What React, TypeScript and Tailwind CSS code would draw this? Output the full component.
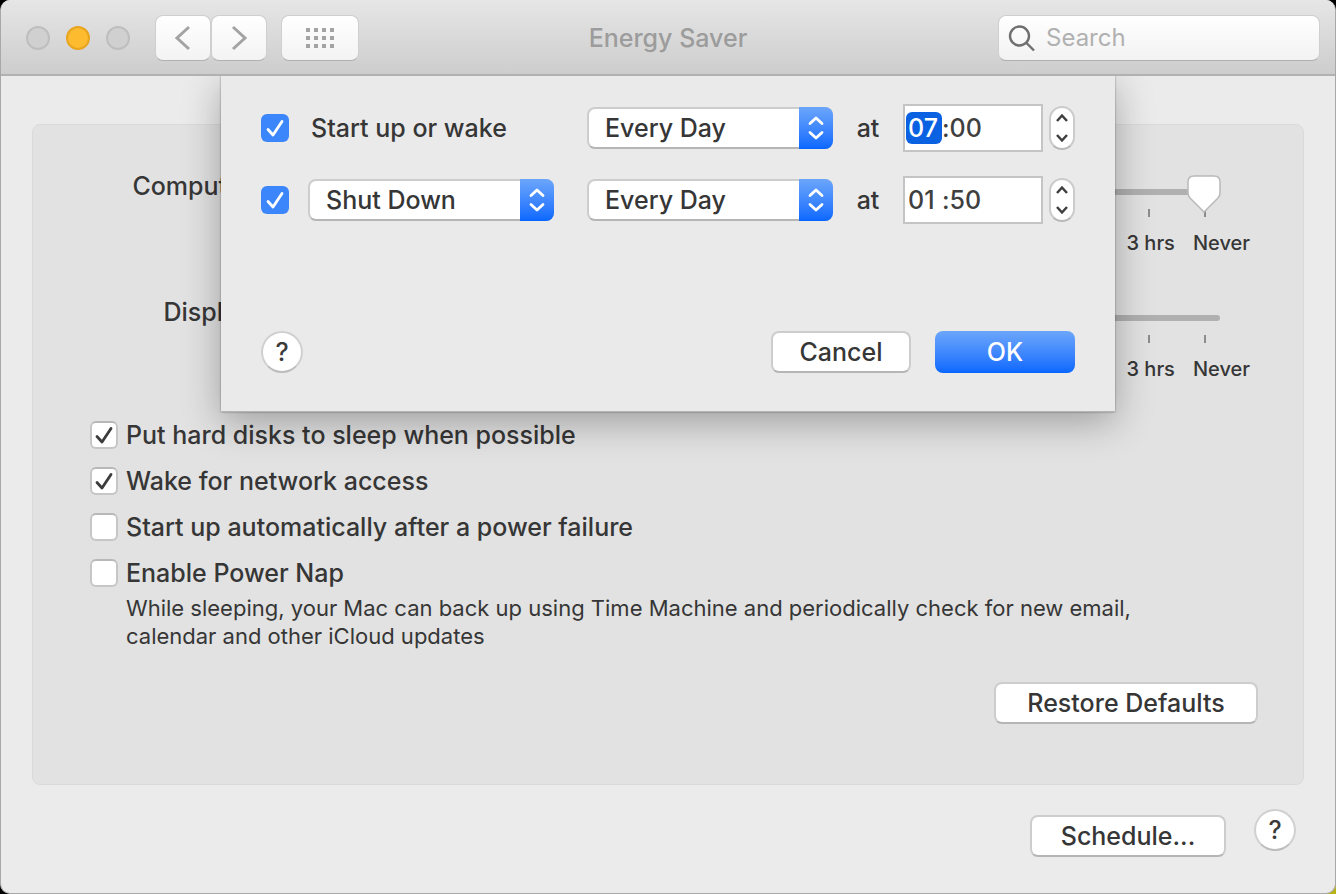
import { useState } from "react";

function Chevron({ points, className }: { points: string; className?: string }) {
  return (
    <svg
      className={className ?? "w-8 h-8"}
      viewBox="0 0 32 32"
      fill="none"
      stroke="currentColor"
      strokeWidth={3}
      aria-hidden="true"
    >
      <polyline points={points} />
    </svg>
  );
}

function CheckBox({
  id,
  label,
  checked,
  accent,
  onChange,
}: {
  id: string;
  label?: string;
  checked: boolean;
  accent?: boolean;
  onChange: (value: boolean) => void;
}) {
  return (
    <span className="relative flex w-7 h-7 flex-shrink-0">
      <input
        id={id}
        type="checkbox"
        aria-label={label}
        checked={checked}
        onChange={(e) => onChange(e.target.checked)}
        className={`appearance-none w-7 h-7 rounded-md ${
          accent
            ? "bg-[#3b86fb]"
            : "bg-white border-2 border-[#c6c6c6] border-t-[#b8b8b8]"
        }`}
      />
      {checked && (
        <svg
          className={`absolute inset-0 w-7 h-7 pointer-events-none ${accent ? "text-white" : "text-[#3c3c3c]"}`}
          viewBox="0 0 28 28"
          fill="none"
          stroke="currentColor"
          strokeWidth={2.8}
          strokeLinecap="round"
          strokeLinejoin="round"
          aria-hidden="true"
        >
          <path d="M7 15.5L12 21L21 7.5" />
        </svg>
      )}
    </span>
  );
}

function PopUp({ label, options }: { label: string; options: string[] }) {
  return (
    <div className="relative w-[246px] h-[42px]">
      <select
        aria-label={label}
        className="appearance-none w-full h-full pl-4 pr-10 rounded-lg bg-white border-2 border-[#cdcdcd] border-b-[#b5b5b5] text-[25px] leading-8 text-[#363636]"
      >
        {options.map((option) => (
          <option key={option}>{option}</option>
        ))}
      </select>
      <span className="absolute right-0 top-0 flex items-center justify-center w-[34px] h-full rounded-r-lg bg-linear-to-b from-[#6ca6fb] to-[#0667fe] text-white pointer-events-none">
        <svg
          className="w-5 h-7"
          viewBox="0 0 20 28"
          fill="none"
          stroke="currentColor"
          strokeWidth={2.8}
          strokeLinecap="round"
          strokeLinejoin="round"
          aria-hidden="true"
        >
          <path d="M4 9.5L10 4L16 9.5M4 18.5L10 24L16 18.5" />
        </svg>
      </span>
    </div>
  );
}

function TimeField({
  label,
  hours,
  minutes,
  selected,
}: {
  label: string;
  hours: string;
  minutes: string;
  selected?: boolean;
}) {
  return (
    <div className="flex items-center gap-[6px]">
      <div
        role="group"
        aria-label={label}
        className="flex items-center w-[140px] h-12 pl-[1px] bg-white border-2 border-[#c4c4c4] text-[25px] leading-8 text-[#3f3f3f]"
      >
        <input
          aria-label={`${label} hours`}
          defaultValue={hours}
          className={`w-9 h-8 rounded-md pl-[2px] outline-none ${selected ? "bg-[#0a62e2] text-white" : ""}`}
        />
        <span>:</span>
        <input
          aria-label={`${label} minutes`}
          defaultValue={minutes}
          className="w-9 h-8 outline-none"
        />
      </div>
      <div className="flex flex-col w-[26px] h-11 rounded-full bg-white border-2 border-[#cbcbcb] border-b-[#b8b8b8] text-[#3f3f3f] overflow-hidden">
        <button aria-label={`${label} up`} className="flex flex-1 items-center justify-center">
          <Chevron points="6,22 16,11 26,22" className="w-4 h-4 stroke-5" />
        </button>
        <button aria-label={`${label} down`} className="flex flex-1 items-center justify-center">
          <Chevron points="6,10 16,21 26,10" className="w-4 h-4 stroke-5" />
        </button>
      </div>
    </div>
  );
}

function PushButton({ children, className }: { children: string; className: string }) {
  return (
    <button
      className={`h-[42px] rounded-lg bg-white border-2 border-[#cdcdcd] border-b-[#b5b5b5] text-[25px] leading-8 text-[#363636] ${className}`}
    >
      {children}
    </button>
  );
}

function HelpButton() {
  return (
    <button
      aria-label="Help"
      className="w-[42px] h-[42px] rounded-full bg-white border-2 border-[#d0d0d0] border-b-[#bcbcbc] text-[25px] leading-8 text-[#3a3a3a]"
    >
      ?
    </button>
  );
}

function SleepSlider({ id, label, initial }: { id: string; label: string; initial: number }) {
  const [value, setValue] = useState(initial);

  return (
    <div className="flex items-start">
      <label htmlFor={id} className="w-[240px] -mt-3 text-right">
        {label}
      </label>
      <div className="flex-1 ml-4">
        <div className="relative h-[18px] mr-[30px] pt-[7px]">
          <div className="h-[6px] rounded-full bg-[#b0b0b0]" />
          <div className="absolute inset-y-0 left-4 right-4">
            <svg
              className="absolute -top-2 w-9 h-10 -ml-[18px]"
              style={{ left: `${value}%` }}
              viewBox="0 0 36 40"
              aria-hidden="true"
            >
              <path
                d="M8 2H28Q34 2 34 8V19Q34 22 32 24L18 38L4 24Q2 22 2 19V8Q2 2 8 2Z"
                fill="#fff"
                stroke="#b9b9b9"
                strokeWidth={1.5}
              />
            </svg>
          </div>
          <input
            id={id}
            type="range"
            value={value}
            onChange={(e) => setValue(Number(e.target.value))}
            className="absolute inset-0 w-full h-full opacity-0"
          />
        </div>
        <div className="flex justify-end gap-[54px] mt-[9px] mr-11">
          <span className="w-[2px] h-2 bg-[#8c8c8c]" />
          <span className="w-[2px] h-2 bg-[#8c8c8c]" />
        </div>
        <div className="flex justify-end gap-[18px] mt-3 text-[20px] leading-7">
          <span>3 hrs</span>
          <span>Never</span>
        </div>
      </div>
    </div>
  );
}

function TitleBar() {
  const tool =
    "flex items-center justify-center h-[46px] rounded-lg bg-linear-to-b from-white to-[#f3f3f3] border border-[#cfcfcf] border-b-[#b0b0b0] text-[#a3a3a3]";

  return (
    <header className="grid grid-cols-[1fr_auto_1fr] items-center h-[76px] px-[15px] pt-[2px] bg-linear-to-b from-[#e6e6e6] to-[#cdcdcd] border-b-2 border-b-[#b1b1b1]">
      <div className="flex items-center pl-[10px]">
        <div className="flex gap-4">
          <button aria-label="Close" className="w-6 h-6 rounded-full bg-[#d0d0d0] border-2 border-[#bebebe]" />
          <button aria-label="Minimise" className="w-6 h-6 rounded-full bg-[#fdbb2f] border-2 border-[#e8a41f]" />
          <button aria-label="Zoom" className="w-6 h-6 rounded-full bg-[#d0d0d0] border-2 border-[#bebebe]" />
        </div>
        <button aria-label="Back" className={`${tool} w-14 ml-[25px]`}>
          <Chevron points="22,5 10,16 22,27" />
        </button>
        <button aria-label="Forward" className={`${tool} w-14`}>
          <Chevron points="10,5 22,16 10,27" />
        </button>
        <button aria-label="Show all" className={`${tool} w-[78px] ml-[14px]`}>
          <svg className="w-[30px] h-[22px]" viewBox="0 0 30 22" fill="currentColor" aria-hidden="true">
            {[1, 9, 17, 25].map((x) =>
              [1, 9, 17].map((y) => <rect key={`${x}-${y}`} x={x} y={y} width={4} height={4} />)
            )}
          </svg>
        </button>
      </div>
      <h1 className="text-[#9c9c9c] font-medium">Energy Saver</h1>
      <label className="flex items-center justify-self-end w-[322px] h-[46px] pl-[9px] rounded-lg bg-linear-to-b from-white to-[#f2f2f2] border border-[#cfcfcf] border-b-[#b0b0b0]">
        <svg
          className="w-7 h-7 text-[#6f6f6f]"
          viewBox="0 0 28 28"
          fill="none"
          stroke="currentColor"
          strokeWidth={2.4}
          aria-hidden="true"
        >
          <circle cx={11.5} cy={12} r={9.5} />
          <path d="M18.5 19L26 26.5" />
        </svg>
        <input
          type="search"
          aria-label="Search"
          placeholder="Search"
          className="flex-1 min-w-0 ml-[10px] font-normal text-[24px] leading-8 outline-none placeholder:text-[#b1b1b1]"
        />
      </label>
    </header>
  );
}

function ScheduleSheet() {
  const [wake, setWake] = useState(true);
  const [shutDown, setShutDown] = useState(true);
  const days = ["Every Day", "Weekdays", "Weekends"];
  const row = "grid grid-cols-[28px_265px_279px_70px_auto] items-center";

  return (
    <div
      role="dialog"
      aria-label="Schedule"
      className="absolute top-0 left-1/2 -translate-x-1/2 w-[894px] px-10 pt-7 pb-[38px] bg-[#eaeaea] border-b border-[#b4b4b4] shadow-[0_0_2px_rgba(0,0,0,0.4),0_10px_36px_rgba(0,0,0,0.3)]"
    >
      <div className="flex flex-col gap-6">
        <div className={row}>
          <CheckBox id="wake" accent checked={wake} onChange={setWake} />
          <label htmlFor="wake" className="pl-[22px]">
            Start up or wake
          </label>
          <div className="pl-[33px]">
            <PopUp label="Start up days" options={days} />
          </div>
          <span className="text-center">at</span>
          <TimeField label="Start up time" hours="07" minutes="00" selected />
        </div>
        <div className={row}>
          <CheckBox id="shut-down" label="Shut down" accent checked={shutDown} onChange={setShutDown} />
          <div className="pl-[19px]">
            <PopUp label="Action" options={["Shut Down", "Restart", "Sleep"]} />
          </div>
          <div className="pl-[33px]">
            <PopUp label="Shut down days" options={days} />
          </div>
          <span className="text-center">at</span>
          <TimeField label="Shut down time" hours="01" minutes="50" />
        </div>
      </div>
      <div className="flex items-center justify-between mt-[107px]">
        <HelpButton />
        <div className="flex gap-6">
          <PushButton className="w-[140px]">Cancel</PushButton>
          <button className="w-[140px] h-[42px] rounded-lg bg-linear-to-b from-[#6ca6fb] to-[#0667fe] text-[25px] leading-8 text-white">
            OK
          </button>
        </div>
      </div>
    </div>
  );
}

const initialOptions = [
  { id: "disks", label: "Put hard disks to sleep when possible", checked: true },
  { id: "network", label: "Wake for network access", checked: true },
  { id: "power", label: "Start up automatically after a power failure", checked: false },
  { id: "nap", label: "Enable Power Nap", checked: false },
];

export default function App() {
  const [options, setOptions] = useState(initialOptions);

  const toggle = (id: string, checked: boolean) =>
    setOptions(options.map((o) => (o.id === id ? { ...o, checked } : o)));

  return (
    <div className="min-h-screen flex flex-col bg-[radial-gradient(circle_at_bottom_right,#b8b414_0,#b8b414_24px,#000_60px)] font-['Inter','Liberation_Sans',sans-serif] font-medium text-[25px] leading-8 text-[#363636]">
      <div className="flex-1 flex flex-col rounded-[10px] overflow-hidden bg-[#ebebeb] border border-[#a8a8a8] border-t-0">
        <TitleBar />
        <main className="relative flex-1 px-[31px] pt-12 pb-9 overflow-hidden">
          <section className="px-[57px] pt-[57px] pb-[60px] rounded-lg bg-[#e2e2e2] border border-[#dadada]">
            <div className="flex flex-col gap-[51px] -mr-1">
              <SleepSlider id="computer-sleep" label="Computer sleep:" initial={100} />
              <SleepSlider id="display-sleep" label="Display sleep:" initial={50} />
            </div>
            <div className="flex flex-col gap-[14px] mt-9">
              {options.map((option) => (
                <div key={option.id} className="flex items-center gap-2">
                  <CheckBox
                    id={option.id}
                    checked={option.checked}
                    onChange={(checked) => toggle(option.id, checked)}
                  />
                  <label htmlFor={option.id}>{option.label}</label>
                </div>
              ))}
            </div>
            <p className="max-w-[1060px] pl-9 mt-[5px] font-normal text-[22px] leading-7">
              While sleeping, your Mac can back up using Time Machine and periodically check for new email,
              calendar and other iCloud updates
            </p>
            <div className="flex justify-end mt-8 -mr-3">
              <PushButton className="w-[264px]">Restore Defaults</PushButton>
            </div>
          </section>
          <div className="flex items-start justify-end gap-7 mt-6 pr-2">
            <PushButton className="w-[196px] mt-[6px]">Schedule...</PushButton>
            <HelpButton />
          </div>
          <ScheduleSheet />
        </main>
      </div>
    </div>
  );
}
